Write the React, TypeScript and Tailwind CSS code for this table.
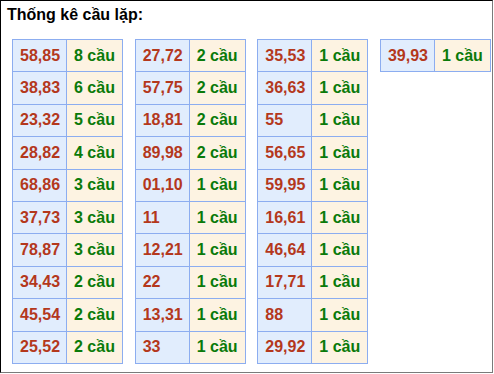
const columns: [string, string][][] = [
  [
    ["58,85", "8 cầu"],
    ["38,83", "6 cầu"],
    ["23,32", "5 cầu"],
    ["28,82", "4 cầu"],
    ["68,86", "3 cầu"],
    ["37,73", "3 cầu"],
    ["78,87", "3 cầu"],
    ["34,43", "2 cầu"],
    ["45,54", "2 cầu"],
    ["25,52", "2 cầu"],
  ],
  [
    ["27,72", "2 cầu"],
    ["57,75", "2 cầu"],
    ["18,81", "2 cầu"],
    ["89,98", "2 cầu"],
    ["01,10", "1 cầu"],
    ["11", "1 cầu"],
    ["12,21", "1 cầu"],
    ["22", "1 cầu"],
    ["13,31", "1 cầu"],
    ["33", "1 cầu"],
  ],
  [
    ["35,53", "1 cầu"],
    ["36,63", "1 cầu"],
    ["55", "1 cầu"],
    ["56,65", "1 cầu"],
    ["59,95", "1 cầu"],
    ["16,61", "1 cầu"],
    ["46,64", "1 cầu"],
    ["17,71", "1 cầu"],
    ["88", "1 cầu"],
    ["29,92", "1 cầu"],
  ],
  [["39,93", "1 cầu"]],
];

function CauTable({ rows }: { rows: [string, string][] }) {
  return (
    <div className="w-[111px] self-start border border-[#8cadf0]">
      {rows.map(([pair, count], i) => (
        <div
          key={pair}
          className={`flex ${i > 0 ? "h-[32.4px] border-t border-[#8cadf0]" : "h-[31.4px]"}`}
        >
          <div className="flex w-[53px] items-center bg-[#e1edfd] pl-[7px] text-[#b4381c]">
            {pair}
          </div>
          <div className="flex flex-1 items-center border-l border-[#8cadf0] bg-[#fdf3e2] pl-[7px] text-[#0a7a0a]">
            {count}
          </div>
        </div>
      ))}
    </div>
  );
}

export default function App() {
  return (
    <div
      className="h-[373px] w-[493px] border-t border-l border-r border-b border-t-black border-l-black border-r-[#7a7a7a] border-b-[#7a7a7a] bg-white text-[16px] font-bold"
      style={{ fontFamily: '"Liberation Sans", Arial, sans-serif' }}
    >
      <div className="pl-[6px] pt-[5px] leading-[18px] text-black">Thống kê cầu lặp:</div>
      <div className="mt-[15px] ml-[11px] flex gap-[11.67px]">
        {columns.map((rows, i) => (
          <CauTable key={i} rows={rows} />
        ))}
      </div>
    </div>
  );
}
